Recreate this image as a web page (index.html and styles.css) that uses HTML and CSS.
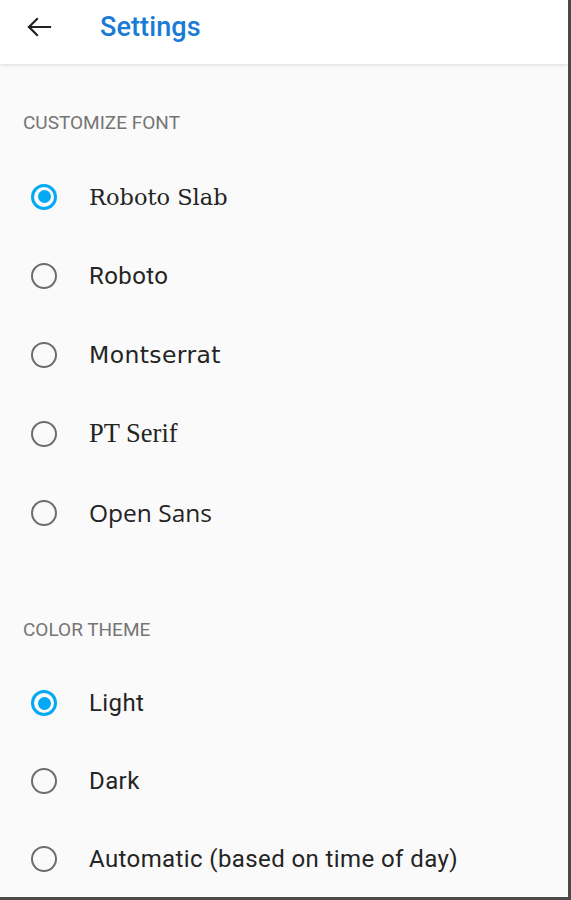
FILE: index.html
```html
<!DOCTYPE html>
<html>
<head>
<meta charset="utf-8">
<link rel="stylesheet" href="styles.css">
</head>
<body>
<div class="frame">
  <header class="toolbar">
    <button class="back" aria-label="Back">
      <svg width="26" height="20" viewBox="0 0 26 20"><path d="M24 10H3 M11 2 L3 10 L11 18" fill="none" stroke="#212121" stroke-width="2.2" stroke-linecap="square"/></svg>
    </button>
    <h1 class="title">Settings</h1>
  </header>
  <main class="content">
    <section class="group">
      <h2 class="group-title">CUSTOMIZE FONT</h2>
      <label class="row"><span class="radio checked"></span><span class="label f-slab">Roboto Slab</span></label>
      <label class="row"><span class="radio"></span><span class="label f-roboto">Roboto</span></label>
      <label class="row"><span class="radio"></span><span class="label f-mont">Montserrat</span></label>
      <label class="row"><span class="radio"></span><span class="label f-pt">PT Serif</span></label>
      <label class="row"><span class="radio"></span><span class="label f-open">Open Sans</span></label>
    </section>
    <section class="group group-2">
      <h2 class="group-title">COLOR THEME</h2>
      <label class="row"><span class="radio checked"></span><span class="label f-roboto">Light</span></label>
      <label class="row"><span class="radio"></span><span class="label f-roboto">Dark</span></label>
      <label class="row"><span class="radio"></span><span class="label f-roboto">Automatic (based on time of day)</span></label>
    </section>
  </main>
</div>
</body>
</html>
```
FILE: styles.css
```css
html, body {
  margin: 0;
  padding: 0;
  height: 100%;
}
body {
  font-family: Roboto, "Liberation Sans", sans-serif;
  background: #fafafa;
}
.frame {
  box-sizing: border-box;
  width: 571px;
  height: 900px;
  overflow: hidden;
  background: #fafafa;
  border-right: 3px solid #4a4a4a;
  border-bottom: 3px solid #4a4a4a;
  display: flex;
  flex-direction: column;
}
.toolbar {
  height: 64px;
  flex: 0 0 64px;
  background: #ffffff;
  display: flex;
  align-items: center;
  box-shadow: 0 1px 4px rgba(0,0,0,0.12);
  position: relative;
  z-index: 1;
  padding-bottom: 10px;
  box-sizing: border-box;
}
.back {
  border: 0;
  background: none;
  padding: 0;
  margin-left: 26px;
  width: 26px;
  height: 20px;
  display: flex;
}
.title {
  margin: 0 0 0 48px;
  font-family: Roboto, sans-serif;
  font-weight: 500;
  font-size: 27px;
  color: #1a7bd6;
  letter-spacing: 0.1px;
}
.content {
  flex: 1;
}
.group {
  display: flex;
  flex-direction: column;
}
.group-title {
  margin: 47px 0 22px 23px;
  height: 24px;
  line-height: 24px;
  font-family: Roboto, sans-serif;
  font-weight: 400;
  font-size: 19px;
  color: #757575;
}
.group-2 .group-title {
  margin-top: 66px;
}
.row {
  height: 79px;
  display: flex;
  align-items: center;
}
.group-2 .row {
  height: 78px;
}
.radio {
  box-sizing: border-box;
  width: 26px;
  height: 26px;
  margin-left: 31px;
  border-radius: 50%;
  border: 2.5px solid #6d6d6d;
  display: flex;
  align-items: center;
  justify-content: center;
}
.radio.checked {
  border: 3px solid #03a9f4;
}
.radio.checked::after {
  content: "";
  width: 13px;
  height: 13px;
  border-radius: 50%;
  background: #03a9f4;
}
.label {
  margin-left: 32px;
  font-size: 24px;
  color: #242424;
}
.f-roboto { font-family: Roboto, sans-serif; letter-spacing: 0.4px; }
.f-slab { font-family: "DejaVu Serif", serif; font-size: 22.5px; }
.f-mont { font-family: "DejaVu Sans", sans-serif; font-size: 23.5px; letter-spacing: 0.4px; }
.f-pt { font-family: "Liberation Serif", serif; font-size: 26.5px; }
.f-open { font-family: "Open Sans", sans-serif; font-size: 24.5px; }
```
